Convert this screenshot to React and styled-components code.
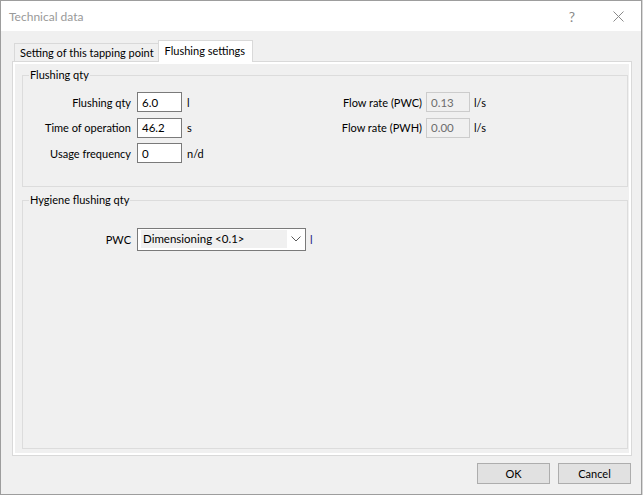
import React from 'react';
import styled, { createGlobalStyle } from 'styled-components';

const GlobalStyle = createGlobalStyle`
	html, body {
		margin: 0;
		padding: 0;
		background: #d8d8d8;
	}
	* {
		box-sizing: border-box;
	}
`

const FONT = `Lato, "Segoe UI", sans-serif`

const Window = styled.div`
	width: 642px;
	height: 495px;
	display: flex;
	flex-direction: column;
	border: 1px solid #9d9d9d;
	background: #f0f0f0;
	font-family: ${FONT};
	font-size: 11px;
	color: #000;
`

const TitleBar = styled.div`
	height: 30px;
	flex: none;
	display: flex;
	align-items: center;
	background: #fff;
	padding-left: 8px;
`

const Title = styled.div`
	flex: 1;
	color: #999;
	font-size: 12px;
`

const TitleButton = styled.div`
	width: 46px;
	height: 30px;
	display: flex;
	align-items: center;
	justify-content: center;
	color: #8a8a8a;
	font-size: 14px;
`

const Body = styled.div`
	flex: 1;
	display: flex;
	flex-direction: column;
	padding: 10px 9px 10px 11px;
`

const TabStrip = styled.div`
	height: 21px;
	display: flex;
	align-items: flex-end;
	padding-left: 2px;
	position: relative;
	z-index: 1;
	margin-bottom: -1px;
`

const Tab = styled.div`
	height: ${p => (p.active ? '22px' : '19px')};
	padding: ${p => (p.active ? '0 7px 2px 6px' : '0 4px 0 5px')};
	display: flex;
	align-items: center;
	border: 1px solid #d9d9d9;
	border-bottom: ${p => (p.active ? 'none' : '1px solid #d9d9d9')};
	background: ${p => (p.active ? '#fff' : '#f0f0f0')};
	margin-left: ${p => (p.active ? '-1px' : '0')};
	white-space: nowrap;
`

const Panel = styled.div`
	height: 395px;
	display: flex;
	flex-direction: column;
	border: 1px solid #d9d9d9;
	box-shadow: inset 0 0 0 2px #fff;
	padding: 5px 3px 6px 9px;
`

const Group = styled.fieldset`
	margin: 0;
	padding: ${p => p.pad};
	border: 1px solid #dcdcdc;
	min-width: 0;
	height: ${p => p.h || 'auto'};
	flex: ${p => (p.grow ? 1 : 'none')};
	& + & {
		margin-top: 5px;
	}
`

const Legend = styled.legend`
	margin-left: 6px;
	padding: 0 1px;
	line-height: 16px;
`

const Fields = styled.div`
	display: flex;
`

const FieldGrid = styled.div`
	display: grid;
	grid-template-columns: ${p => p.cols};
	grid-auto-rows: 20px;
	row-gap: 5.5px;
	column-gap: 0;
	align-items: center;
	width: ${p => p.w || 'auto'};
`

const Label = styled.span`
	justify-self: end;
	white-space: nowrap;
	padding-right: ${p => p.gap || '6px'};
`

const Input = styled.div`
	height: 20px;
	border: 1px solid ${p => (p.disabled ? '#cccccc' : '#7a7a7a')};
	background: ${p => (p.disabled ? '#f0f0f0' : '#fff')};
	color: ${p => (p.disabled ? '#6d6d6d' : '#000')};
	padding: 1px 4px 0;
	display: flex;
	align-items: center;
	line-height: 1;
	font-size: 11.5px;
`

const Unit = styled.span`
	padding-left: ${p => p.gap || '5px'};
	color: ${p => p.color || '#000'};
`

const Select = styled.div`
	height: 23px;
	border: 1px solid #7a7a7a;
	background: #fff;
	padding: 1px 1px 2px 3px;
	display: flex;
`

const SelectValue = styled.div`
	flex: 1;
	background: #f0f0f0;
	display: flex;
	align-items: center;
	padding-left: 2px;
	font-size: 11.5px;
`

const SelectArrow = styled.div`
	width: 17px;
	display: flex;
	align-items: center;
	justify-content: center;
`

const Footer = styled.div`
	margin-top: 7px;
	display: flex;
	justify-content: flex-end;
	gap: 8px;
	padding-right: 1px;
`

const Button = styled.div`
	width: 73px;
	height: 21px;
	border: 1px solid #adadad;
	background: #e1e1e1;
	display: flex;
	align-items: center;
	justify-content: center;
`

const Chevron = () => (
	<svg width="10" height="6" viewBox="0 0 10 6">
		<path d="M0.5 0.5 L5 5 L9.5 0.5" fill="none" stroke="#5a5a5a" strokeWidth="1" />
	</svg>
)

const CloseIcon = () => (
	<svg width="11" height="11" viewBox="0 0 11 11">
		<path d="M0.5 0.5 L10.5 10.5 M10.5 0.5 L0.5 10.5" stroke="#8a8a8a" strokeWidth="1" />
	</svg>
)

const App = () => {
	return (
		<>
			<GlobalStyle />
			<Window>
				<TitleBar>
					<Title>Technical data</Title>
					<TitleButton>?</TitleButton>
					<TitleButton>
						<CloseIcon />
					</TitleButton>
				</TitleBar>
				<Body>
					<TabStrip>
						<Tab>Setting of this tapping point</Tab>
						<Tab active>Flushing settings</Tab>
					</TabStrip>
					<Panel>
						<Group h="120px" pad="9px 0 0 0">
							<Legend>Flushing qty</Legend>
							<Fields>
								<FieldGrid cols="114px 45px auto" w="319px">
									<Label>Flushing qty</Label>
									<Input>6.0</Input>
									<Unit>l</Unit>
									<Label>Time of operation</Label>
									<Input>46.2</Input>
									<Unit>s</Unit>
									<Label>Usage frequency</Label>
									<Input>0</Input>
									<Unit>n/d</Unit>
								</FieldGrid>
								<FieldGrid cols="84px 44px auto">
									<Label gap="4px">Flow rate (PWC)</Label>
									<Input disabled>0.13</Input>
									<Unit gap="4px">l/s</Unit>
									<Label gap="4px">Flow rate (PWH)</Label>
									<Input disabled>0.00</Input>
									<Unit gap="4px">l/s</Unit>
								</FieldGrid>
							</Fields>
						</Group>
						<Group grow pad="21px 0 0 0">
							<Legend>Hygiene flushing qty</Legend>
							<FieldGrid cols="114px 169px auto">
								<Label>PWC</Label>
								<Select>
									<SelectValue>Dimensioning &lt;0.1&gt;</SelectValue>
									<SelectArrow>
										<Chevron />
									</SelectArrow>
								</Select>
								<Unit gap="4px" color="#1e2480">l</Unit>
							</FieldGrid>
						</Group>
					</Panel>
					<Footer>
						<Button>OK</Button>
						<Button>Cancel</Button>
					</Footer>
				</Body>
			</Window>
		</>
	)
}

export default App;
